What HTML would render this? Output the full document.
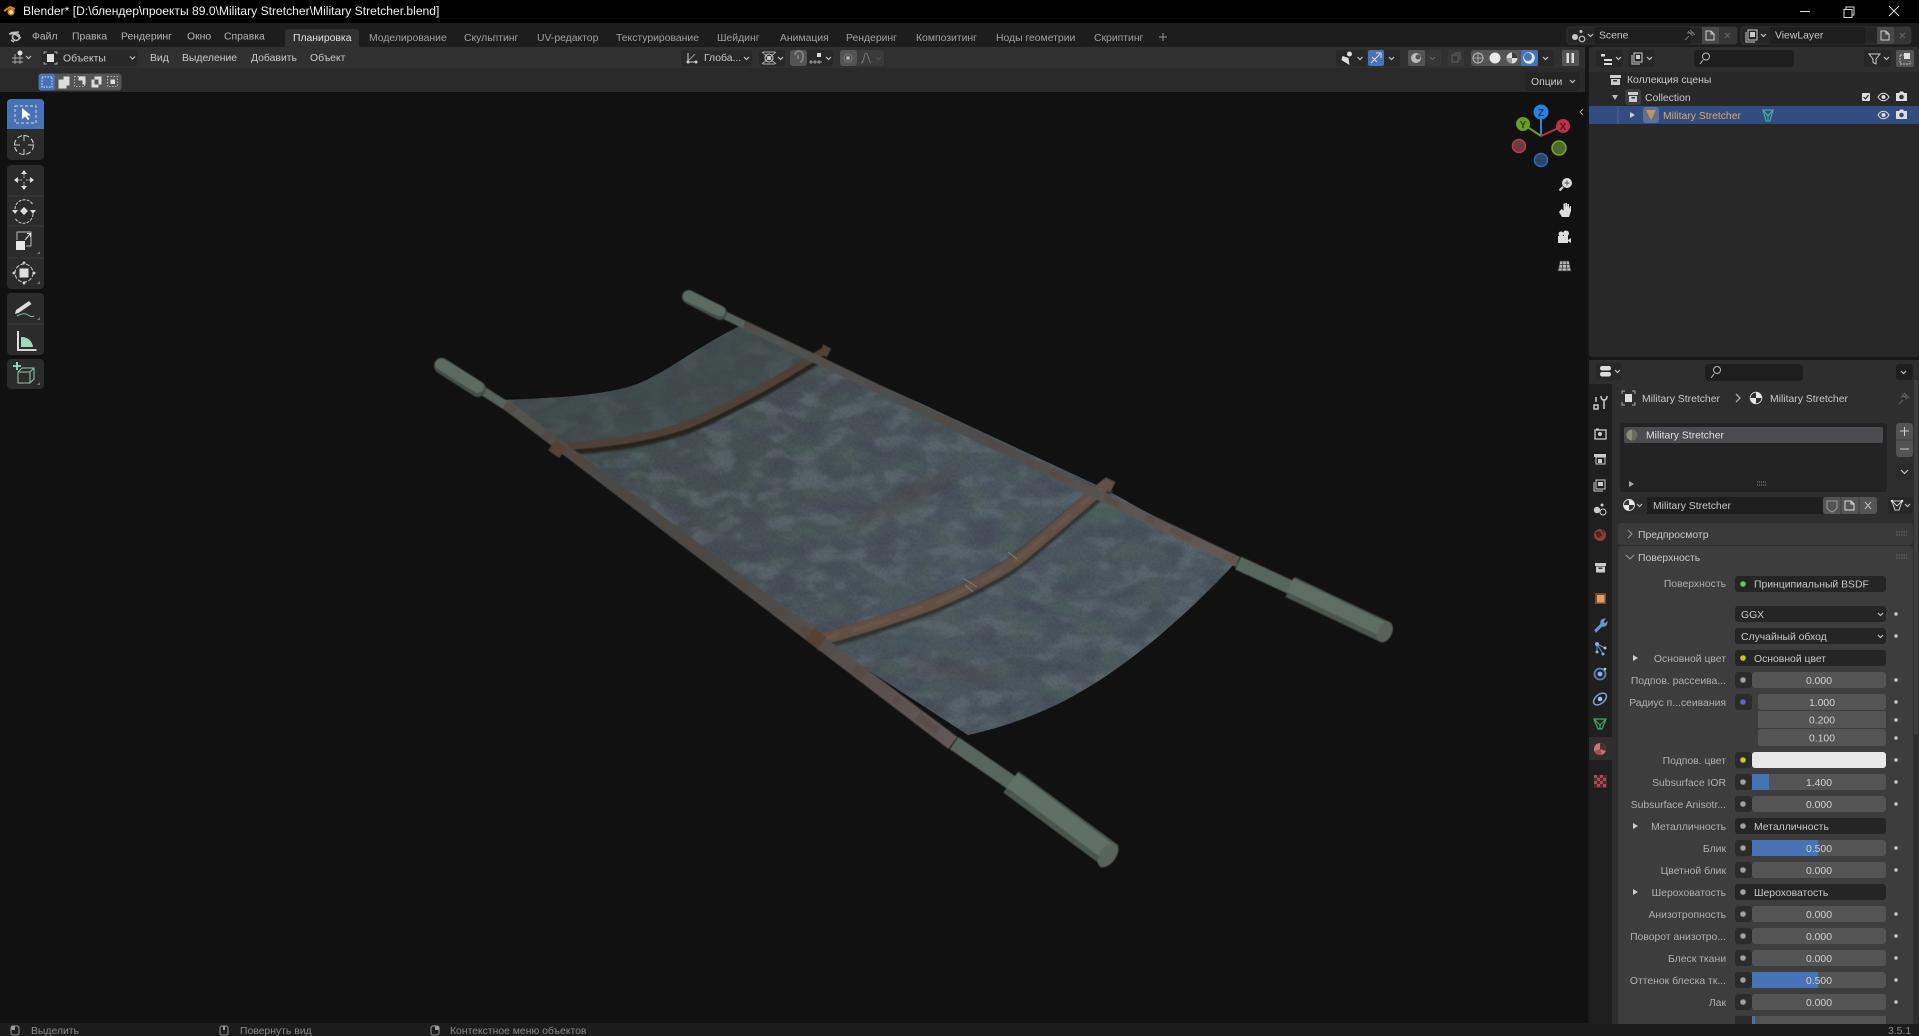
<!DOCTYPE html>
<html lang="ru"><head><meta charset="utf-8"><title>Blender</title>
<style>
html,body{margin:0;padding:0;background:#111;width:1919px;height:1036px;overflow:hidden}
svg{display:block;position:absolute;left:0;top:0}
text{font-family:"Liberation Sans","Noto Sans CJK SC",sans-serif;font-size:10.4px;fill:#c0c0c0;white-space:pre}
.m{fill:#a0a0a0}.w{fill:#e0e0e0}.l{fill:#b0b0b0;text-anchor:end}.v{fill:#d2d2d2;text-anchor:middle}.f{fill:#c8c8c8}.d{fill:#8a8a8a}
.ic{fill:none;stroke:#c0c0c0;stroke-width:1.2}
.fi{fill:#c8c8c8}
.num{fill:#545454}.sk{fill:#2b2b2b}.fd{fill:#252525}.dot{fill:#cfcfcf}
</style></head><body>
<svg width="1919" height="1036" viewBox="0 0 1919 1036" xmlns="http://www.w3.org/2000/svg">
<defs>
<clipPath id="fab"><path d="M502 400C560 398 610 395 640 383C670 370 700 345 742 325L920 403L1103 488L1236 562C1190 612 1130 665 1075 695C1040 715 1000 728 968 735L737 585L558 450Z"/></clipPath>
<linearGradient id="fg" gradientUnits="userSpaceOnUse" x1="520" y1="340" x2="1100" y2="700"><stop offset="0" stop-color="#404a4a"/><stop offset=".3" stop-color="#465052"/><stop offset=".65" stop-color="#4c565e"/><stop offset="1" stop-color="#4d5860"/></linearGradient>
<filter id="c1" x="0" y="0" width="1" height="1" color-interpolation-filters="sRGB"><feTurbulence type="fractalNoise" baseFrequency=".03 .05" numOctaves="3" seed="4"/><feColorMatrix values="0 0 0 0 .31 0 0 0 0 .38 0 0 0 0 .36 5.500 0 0 0 -2.700"/><feGaussianBlur stdDeviation="1"/></filter>
<filter id="c2" x="0" y="0" width="1" height="1" color-interpolation-filters="sRGB"><feTurbulence type="fractalNoise" baseFrequency=".034 .055" numOctaves="3" seed="11"/><feColorMatrix values="0 0 0 0 .39 0 0 0 0 .43 0 0 0 0 .46 5.500 0 0 0 -2.700"/><feGaussianBlur stdDeviation="1"/></filter>
<filter id="c3" x="0" y="0" width="1" height="1" color-interpolation-filters="sRGB"><feTurbulence type="fractalNoise" baseFrequency=".03 .05" numOctaves="3" seed="23"/><feColorMatrix values="0 0 0 0 .27 0 0 0 0 .29 0 0 0 0 .34 5.500 0 0 0 -2.800"/><feGaussianBlur stdDeviation="1"/></filter>
<filter id="gr" x="0" y="0" width="1" height="1" color-interpolation-filters="sRGB"><feTurbulence type="fractalNoise" baseFrequency=".4" numOctaves="2" seed="7"/><feColorMatrix values="0 0 0 0 .1 0 0 0 0 .1 0 0 0 0 .12 3 0 0 0 -1.300"/></filter>
<filter id="b1" x="-20%" y="-20%" width="140%" height="140%"><feGaussianBlur stdDeviation="1"/></filter>
<filter id="b0" x="-5%" y="-5%" width="110%" height="110%"><feGaussianBlur stdDeviation=".6"/></filter>
<filter id="b4" x="-30%" y="-30%" width="160%" height="160%"><feGaussianBlur stdDeviation="7"/></filter>
<linearGradient id="p1" gradientUnits="userSpaceOnUse" x1="500" y1="402" x2="953" y2="743"><stop offset="0" stop-color="#575652"/><stop offset=".15" stop-color="#4c4a46"/><stop offset=".5" stop-color="#4c4a46"/><stop offset=".85" stop-color="#5a5150"/><stop offset="1" stop-color="#625856"/></linearGradient>
<linearGradient id="p2" gradientUnits="userSpaceOnUse" x1="742" y1="325" x2="1238" y2="562"><stop offset="0" stop-color="#505350"/><stop offset=".5" stop-color="#4e4c4b"/><stop offset="1" stop-color="#645a58"/></linearGradient>
</defs>

<!-- backgrounds -->
<rect x="0" y="0" width="1919" height="23" fill="#000"/>
<rect x="0" y="23" width="1919" height="24" fill="#1d1d1d"/>
<rect x="0" y="47" width="1919" height="989" fill="#161616"/>
<rect x="0" y="92" width="1587" height="932" fill="#111"/>
<rect x="0" y="47" width="1585" height="21" fill="#303030"/>
<rect x="0" y="68" width="1585" height="24" fill="#2a2a2a"/>
<rect x="0" y="1023" width="1919" height="13" fill="#1c1c1c"/>

<!-- title bar -->
<circle cx="11" cy="12" r="3.600" fill="#e87d0d"/><circle cx="11" cy="12" r="1.800" fill="#fff"/><path d="M4 11L10 7L15 9" stroke="#e87d0d" stroke-width="2" fill="none"/>
<text x="23" y="15" style="font-size:12.1px;fill:#f0f0f0">Blender* [D:\блендер\проекты 89.0\Military Stretcher\Military Stretcher.blend]</text>
<path d="M1800 11.500H1810" stroke="#ddd"/><path d="M1844 9.500h8v8h-8zM1846 9.500v-2.500h8v8h-2" fill="none" stroke="#ddd"/><path d="M1889 6l10 10M1899 6l-10 10" stroke="#ddd"/>

<!-- top bar -->
<g class="ic" stroke="#ccc"><circle cx="16" cy="37" r="3.500" stroke-width="1.600"/><path d="M9 34L16 33M11 40L14 42M19 32L12 32.500L21 38" stroke-width="1.400"/></g>
<text x="32" y="39.500" style="fill:#b4b4b4">Файл</text>
<text x="72" y="39.500" style="fill:#b4b4b4">Правка</text>
<text x="121" y="39.500" style="fill:#b4b4b4">Рендеринг</text>
<text x="187" y="39.500" style="fill:#b4b4b4">Окно</text>
<text x="224" y="39.500" style="fill:#b4b4b4">Справка</text>
<path d="M285 47V32a3 3 0 0 1 3-3h68a3 3 0 0 1 3 3V47Z" fill="#303030"/>
<text x="293" y="41" class="w">Планировка</text>
<text x="369" y="41" class="m">Моделирование</text>
<text x="464" y="41" class="m">Скульптинг</text>
<text x="537" y="41" class="m">UV-редактор</text>
<text x="616" y="41" class="m">Текстурирование</text>
<text x="717" y="41" class="m">Шейдинг</text>
<text x="780" y="41" class="m">Анимация</text>
<text x="846" y="41" class="m">Рендеринг</text>
<text x="916" y="41" class="m">Композитинг</text>
<text x="996" y="41" class="m">Ноды геометрии</text>
<text x="1094" y="41" class="m">Скриптинг</text>
<path d="M1159 37h8M1163 33v8" stroke="#999"/>

<!-- scene / viewlayer -->
<rect x="1567" y="27" width="170" height="17" rx="3" fill="#252525" stroke="#333"/>
<rect x="1595" y="27" width="95" height="17" fill="#1e1e1e"/>
<rect x="1702" y="27" width="17" height="17" fill="#484848"/><rect x="1719" y="27" width="18" height="17" rx="2" fill="#363636"/>
<circle cx="1575" cy="37" r="3" class="fi"/><circle cx="1582" cy="39" r="2.800" class="ic"/><circle cx="1581" cy="31.500" r="1.500" class="fi"/><path d="M1588 34l2.500 2.500l2.500-2.500" class="ic"/>
<text x="1599" y="38.500" class="f">Scene</text>
<path d="M1685 40l4-4M1688 31l5 5M1690 30l5 5M1687 33l7-0" stroke="#777" fill="none"/>
<path d="M1706 31h5l3 3v6h-8zM1711 31v3h3" fill="none" stroke="#ccc"/><path d="M1725 33l5 5M1730 33l-5 5" stroke="#666"/>
<rect x="1741" y="27" width="170" height="17" rx="3" fill="#252525" stroke="#333"/>
<rect x="1770" y="27" width="95" height="17" fill="#1e1e1e"/>
<rect x="1877" y="27" width="17" height="17" fill="#484848"/><rect x="1894" y="27" width="17" height="17" rx="2" fill="#363636"/>
<path d="M1748 30h9v10h-9zM1746 32v10h9" fill="none" stroke="#ccc"/><rect x="1750" y="32" width="5" height="5" fill="#ccc"/><path d="M1761 34l2.500 2.500l2.500-2.500" class="ic"/>
<text x="1775" y="38.500" class="f">ViewLayer</text>
<path d="M1881 31h5l3 3v6h-8zM1886 31v3h3" fill="none" stroke="#ccc"/><path d="M1900 33l5 5M1905 33l-5 5" stroke="#666"/>

<!-- viewport header left -->
<path d="M12 58h11M12 62h11M15 54v10M20 54v10" stroke="#aaa" fill="none" stroke-width=".9"/><circle cx="20" cy="53" r="2.500" fill="#ddd"/><path d="M26 56l2.500 2.500l2.500-2.500" class="ic"/>
<rect x="41" y="50" width="97" height="16" rx="3" fill="#282828"/>
<rect x="47" y="54" width="7" height="8" fill="#ddd"/><path d="M44 54v-2h3M54 52h3v2M44 62v2h3M54 64h3v-2" fill="none" stroke="#aaa"/>
<text x="63" y="61.500" class="f">Объекты</text><path d="M130 56.500l2.500 2.500l2.500-2.500" class="ic"/>
<text x="150" y="61" class="f">Вид</text><text x="182" y="61" class="f">Выделение</text><text x="251" y="61" class="f">Добавить</text><text x="310" y="61" class="f">Объект</text>

<!-- tool settings select modes -->
<g transform="translate(-1.500,.5)">
<rect x="40" y="73" width="83" height="17" rx="3" fill="#545454"/>
<rect x="40" y="73" width="16.500" height="17" rx="3" fill="#4772b3"/>
<rect x="43.500" y="76.500" width="10" height="10" fill="none" stroke="#e8e8e8" stroke-dasharray="1.500 1.200"/>
<path d="M60 79h5v-3h6v9h-3v3h-8z" fill="#ddd"/>
<rect x="76" y="76" width="10" height="10" fill="none" stroke="#aaa" stroke-dasharray="1.500 1.500"/><path d="M80 76h7v8h-3v-4h-4z" fill="#ddd"/>
<path d="M93 79h3v-3h7v8h-3v3h-7z" fill="#ddd"/><rect x="96" y="79" width="4" height="5" fill="#545454"/>
<rect x="109" y="76" width="10" height="10" fill="none" stroke="#aaa" stroke-dasharray="1.500 1.500"/><rect x="112" y="79" width="4.500" height="4.500" fill="#ddd"/>
</g>

<!-- center header -->
<rect x="681" y="50" width="71" height="16" rx="3" fill="#282828"/>
<path d="M688 53v9h9" fill="none" stroke="#ccc"/><path d="M687 62l8-8" stroke="#999"/><circle cx="688" cy="62" r="1.500" fill="#ccc"/><circle cx="696" cy="62" r="1.500" fill="#ccc"/>
<text x="704" y="61" class="f">Глоба...</text><path d="M744 57l2.500 2.500l2.500-2.500" class="ic"/>
<rect x="759" y="50" width="26" height="16" rx="3" fill="#282828"/>
<path d="M762 52l14 12M776 52l-14 12M763 52h12M763 64h12" stroke="#aaa" fill="none"/><circle cx="769" cy="58" r="4" fill="none" stroke="#ccc"/><circle cx="769" cy="58" r="2" fill="#ccc"/><path d="M778 57l2.500 2.500l2.500-2.500" class="ic"/>
<rect x="790" y="50" width="43" height="16" rx="3" fill="#282828"/><rect x="790" y="50" width="17" height="16" rx="3" fill="#545454"/>
<path d="M795 55a4 4 0 0 1 8 0v3a4 4 0 0 1-3 4M798 55v4" fill="none" stroke="#888" stroke-width="1.600"/>
<path d="M809 62h13M811 60v4M815 60v4M819 60v4" stroke="#aaa" fill="none" stroke-width=".9"/><rect x="817" y="53" width="4" height="4" fill="#ddd"/><path d="M826 57l2.500 2.500l2.500-2.500" class="ic"/>
<rect x="840" y="50" width="44" height="16" rx="3" fill="#3a3a3a"/><rect x="840" y="50" width="17" height="16" rx="3" fill="#545454"/>
<circle cx="848" cy="58" r="4" fill="none" stroke="#777"/><circle cx="848" cy="58" r="1.800" fill="#bbb"/>
<path d="M861 63c3 0 3-10 5-10s3 10 5 10" fill="none" stroke="#777"/><path d="M876 57l2.500 2.500l2.500-2.500" fill="none" stroke="#555"/>

<!-- right header icons -->
<rect x="1336" y="50" width="31" height="16" rx="3" fill="#282828"/>
<g transform="translate(2.500,0)"><path d="M1339 60l8 5l-1-7l-6-2z" fill="#ddd"/><circle cx="1347" cy="54" r="2.500" fill="#ddd"/><path d="M1355 57l2.500 2.500l2.500-2.500" class="ic"/></g>
<rect x="1368" y="50" width="16" height="16" rx="2" fill="#4772b3"/><rect x="1384" y="50" width="16" height="16" rx="2" fill="#282828"/>
<path d="M1371 63l9-9M1376 53h5v5M1372 57l5 5" fill="none" stroke="#ddd"/><path d="M1389 57l2.500 2.500l2.500-2.500" class="ic"/>
<rect x="1408" y="50" width="17" height="16" rx="2" fill="#545454"/><rect x="1425" y="50" width="16" height="16" rx="2" fill="#363636"/>
<circle cx="1416" cy="58" r="5" fill="#bbb"/><circle cx="1418" cy="57" r="2.500" fill="#545454"/><path d="M1430 57l2.500 2.500l2.500-2.500" fill="none" stroke="#666"/>
<rect x="1448" y="50" width="16" height="16" rx="2" fill="#363636"/><path d="M1452 55h6v7h-6zM1454 53h6v7" fill="none" stroke="#5f5f5f"/>
<rect x="1471" y="50" width="68" height="16" rx="3" fill="#545454"/><rect x="1521" y="50" width="17" height="16" rx="2" fill="#4772b3"/><rect x="1538" y="50" width="16" height="16" rx="2" fill="#282828"/>
<circle cx="1478" cy="58" r="5" fill="none" stroke="#bbb"/><path d="M1473 58h10M1478 53v10" stroke="#bbb" stroke-width=".8"/>
<circle cx="1495" cy="58" r="5.500" fill="#e8e8e8"/>
<circle cx="1512" cy="58" r="5.500" fill="#ddd"/><path d="M1512 58V52.500a5.500 5.500 0 0 1 5.500 5.500z" fill="#3a3a3a"/><path d="M1512 58h-5.500a5.500 5.500 0 0 0 5.500 5.500z" fill="#9a9a9a"/>
<circle cx="1529" cy="58" r="5.800" fill="#d9e4f5"/><circle cx="1528" cy="57" r="4" fill="#4772b3"/>
<path d="M1543 57l2.500 2.500l2.500-2.500" class="ic"/>
<rect x="1562" y="50" width="17" height="16" rx="2" fill="#545454"/><rect x="1566.500" y="53" width="2.500" height="10" fill="#ddd"/><rect x="1571.500" y="53" width="2.500" height="10" fill="#ddd"/>
<rect x="1526" y="73" width="53" height="17" rx="3" fill="#252525" stroke="#222"/><text x="1531" y="85" class="f">Опции</text><path d="M1570 80l2.500 2.500l2.500-2.500" class="ic"/>

<!-- tool shelf -->
<rect x="7" y="99" width="37" height="61" rx="4" fill="#2b2b2b"/><path d="M7 129V103a4 4 0 0 1 4-4h29a4 4 0 0 1 4 4v26Z" fill="#4772b3"/>
<rect x="15" y="106" width="21" height="17" fill="none" stroke="#cfd9ea" stroke-dasharray="3 2"/><path d="M22 108v11l3-2.500l3 3.500l1.500-1l-2.500-3.500h4z" fill="#fff"/>
<circle cx="24" cy="145" r="9.500" fill="none" stroke="#ddd" stroke-dasharray="5 2.500"/><path d="M14 145h6M28 145h6M24 135v6M24 149v6" stroke="#ccc"/>
<rect x="7" y="165" width="37" height="124" rx="4" fill="#2b2b2b"/>
<path d="M7 196h37M7 226h37M7 258h37" stroke="#3a3a3a"/>
<path d="M24 170l3 4h-6zM24 190l3-4h-6zM14 180l4-3v6zM34 180l-4-3v6z" fill="#ddd"/><path d="M24 174v4M24 182v4M18 180h4M26 180h4" stroke="#ccc" stroke-dasharray="1.500 1"/>
<path d="M15 209a9.500 9.500 0 0 1 18-4M33 214a9.500 9.500 0 0 1-18 4" fill="none" stroke="#ccc" stroke-dasharray="3 1.200"/><path d="M24 207l4 4l-4 4l-4-4z" fill="#ddd"/><path d="M12 210h6l-3 4zM30 210h6l-3 4z" fill="#ddd"/>
<rect x="16" y="241" width="9" height="9" fill="#e6e6e6"/><path d="M17 240v-8h14v14h-5" fill="none" stroke="#bbb"/><path d="M25 240l5-6M27 233.500h3.500v3.500" fill="none" stroke="#ddd"/>
<circle cx="24" cy="273" r="9" fill="none" stroke="#ccc" stroke-dasharray="4 1.500"/><rect x="19.500" y="268.500" width="9" height="9" fill="#ddd"/><path d="M24 261l2 2.500h-4zM24 285l2-2.500h-4zM12 273l2.500-2v4zM36 273l-2.500-2v4z" fill="#ddd"/>
<rect x="7" y="293" width="37" height="62" rx="4" fill="#2b2b2b"/><path d="M7 324h37" stroke="#3a3a3a"/>
<path d="M15 314l1-4l13-9l2.500 3l-13 9z" fill="#ddd"/><path d="M17 316c6-3 8-3 11-1s4 2 6 1" fill="none" stroke="#88b9a6"/>
<path d="M18 331v19h18" fill="none" stroke="#ddd" stroke-width="2"/><path d="M21 337v10h12a11 11 0 0 0-12-10z" fill="#9fd9bd"/><path d="M17 350h20" stroke="#ccc"/>
<rect x="7" y="359" width="37" height="30" rx="4" fill="#2b2b2b"/>
<path d="M18 372l4-4h12v11l-4 4h-12zM18 372h12v11M30 372l4-4" fill="none" stroke="#8fc9ad"/><path d="M13 366h8M17 362v8" stroke="#9fe0c0" stroke-width="1.800"/>
<path d="M40 128v-3l-3 3zM40 284v-3l-3 3zM40 320v-3l-3 3zM40 385v-3l-3 3zM40 254v-3l-3 3z" fill="#777"/>

<!-- stretcher -->
<g>
<path d="M502 400C560 398 610 395 640 383C670 370 700 345 742 325L920 403L1103 488L1236 562C1190 612 1130 665 1075 695C1040 715 1000 728 968 735L737 585L558 450Z" fill="url(#fg)"/>
<g clip-path="url(#fab)">
<rect x="480" y="310" width="780" height="440" filter="url(#c1)" opacity=".55"/>
<rect x="480" y="310" width="780" height="440" filter="url(#c2)" opacity=".6"/>
<rect x="480" y="310" width="780" height="440" filter="url(#c3)" opacity=".55"/>
<rect x="480" y="310" width="780" height="440" filter="url(#gr)" opacity=".1"/>
<path d="M490 395L740 320L830 352L690 430L560 450Z" fill="#3e4747" opacity=".5" filter="url(#b1)"/>
<ellipse cx="905" cy="500" rx="60" ry="8" fill="#54433f" opacity=".35" filter="url(#b4)" transform="rotate(-28 905 500)"/>
<ellipse cx="950" cy="672" rx="50" ry="8" fill="#524444" opacity=".3" filter="url(#b4)" transform="rotate(10 950 672)"/>
<ellipse cx="1100" cy="515" rx="30" ry="12" fill="#44705f" opacity=".35" filter="url(#b4)"/>
<ellipse cx="925" cy="632" rx="40" ry="7" fill="#44705f" opacity=".3" filter="url(#b4)"/>
</g>
<!-- straps -->
<path d="M563 450C600 449 650 442 687 429C720 416 780 384 822 356" fill="none" stroke="#27231f" stroke-width="10" filter="url(#b1)"/>
<path d="M563 446C600 445 650 438 687 425C720 412 780 380 822 352" fill="none" stroke="#4f4138" stroke-width="7.500" filter="url(#b0)"/>
<path d="M816 644C860 632 920 612 947 600C975 588 1005 572 1023 557C1050 535 1075 512 1108 486" fill="none" stroke="#33312d" stroke-width="15" filter="url(#b1)"/>
<path d="M816 641C860 629 920 610 947 598C975 585 1005 570 1023 555C1050 533 1075 510 1108 483" fill="none" stroke="#5f4f45" stroke-width="11.500" filter="url(#b0)"/>
<path d="M816 641C860 629 920 610 947 598C975 585 1005 570 1023 555C1050 533 1075 510 1108 483" fill="none" stroke="#6e5a4c" stroke-width="4" stroke-dasharray="24 14 40 10" opacity=".6"/>
<path d="M963 578l14 9M1008 552l9 7M973 592l-8-7" stroke="#7a8478" fill="none"/>
<!-- poles -->
<g filter="url(#b0)">
<path d="M508 400L957.500 737L948.500 749L502 408Z" fill="url(#p1)"/>
<path d="M505 404L953 743" stroke="#544539" stroke-width="8" fill="none" stroke-dasharray="12 38 7 22 26 41" opacity=".45"/>
<path d="M747 321.400L1240 557L1236 567L743 328.600Z" fill="url(#p2)"/>
<path d="M745 325L1238 562" stroke="#554a42" stroke-width="6" fill="none" stroke-dasharray="16 30 9 18 24 36" opacity=".45"/>
<path d="M552 445L563 453" stroke="#553f30" stroke-width="13"/>
<path d="M810 634L822 643" stroke="#553f33" stroke-width="14"/>
<path d="M821 349L829 353" stroke="#4f4036" stroke-width="10"/>
<path d="M1103 482L1113 487" stroke="#5f4f45" stroke-width="11"/>
</g>
<!-- grips -->
<g filter="url(#b0)">
<path d="M477 387L505 405" stroke="#59625d" stroke-width="9"/>
<path d="M442 366L478 389" stroke="#434e48" stroke-width="16" stroke-linecap="round"/><path d="M441 364L478 387" stroke="#5b6a62" stroke-width="12" stroke-linecap="round"/>
<path d="M718 312L745 325" stroke="#55605b" stroke-width="8"/>
<path d="M689 297L720 313" stroke="#434e48" stroke-width="14" stroke-linecap="round"/><path d="M688 296L720 311" stroke="#5b6a62" stroke-width="11" stroke-linecap="round"/>
<path d="M1238 563L1290 587" stroke="#56655d" stroke-width="14"/>
<path d="M1290 587L1385 632" stroke="#48544e" stroke-width="22"/>
<path d="M1290 585L1385 630" stroke="#5e6d65" stroke-width="15"/>
<ellipse cx="1385" cy="632" rx="7" ry="11" transform="rotate(25 1385 632)" fill="#566259"/>
<path d="M954 743L1012 783" stroke="#56655d" stroke-width="15"/>
<path d="M1011 782L1107 853" stroke="#48544e" stroke-width="26"/>
<path d="M1012 780L1107 851" stroke="#5f6f66" stroke-width="18"/>
<ellipse cx="1108" cy="855" rx="8" ry="14" transform="rotate(36 1108 855)" fill="#58645c"/>
</g>
</g>

<!-- gizmo -->
<path d="M1541 136V112" stroke="#3a80d0" stroke-width="2"/><path d="M1541 136L1523 124" stroke="#6a9a2a" stroke-width="2"/><path d="M1541 136L1563 126" stroke="#b3364a" stroke-width="2"/>
<circle cx="1519" cy="146" r="6.500" fill="#6d3a42" stroke="#b5404f" stroke-width="1.500"/>
<circle cx="1559" cy="148" r="7" fill="#4e6a2a" stroke="#76a62c" stroke-width="1.500"/>
<circle cx="1541" cy="160" r="6.500" fill="#2c466a" stroke="#2f6ab0" stroke-width="1.500"/>
<circle cx="1541" cy="112" r="7.500" fill="#2a82e0"/><text x="1541" y="116" text-anchor="middle" style="font-size:10px;font-weight:bold;fill:#103a66">Z</text>
<circle cx="1523" cy="124" r="7" fill="#6a9c26"/><text x="1523" y="128" text-anchor="middle" style="font-size:10px;font-weight:bold;fill:#2c4410">Y</text>
<circle cx="1563" cy="126" r="7" fill="#b8334a"/><text x="1563" y="130" text-anchor="middle" style="font-size:10px;font-weight:bold;fill:#521320">X</text>
<path d="M1583 109l-3 3l3 3" fill="none" stroke="#aaa"/>
<circle cx="1567" cy="183" r="5" fill="#ddd"/><path d="M1564.500 183h5M1567 180.500v5" stroke="#555"/><path d="M1563 187l-3.500 3.500" stroke="#ddd" stroke-width="2"/>
<path d="M1559 212l3 5h7l2-6v-5l-1 0l-1 3v-5h-1.500l-.5 4v-5h-1.500l-.5 5v-4.500h-1.500v7l-2-1.500z" fill="#ddd"/>
<rect x="1558" y="236" width="10" height="7" fill="#ddd"/><circle cx="1561" cy="234" r="2.500" fill="#ddd"/><circle cx="1566" cy="233.500" r="3" fill="#ddd"/><path d="M1568 240l3-2v5l-3-2z" fill="#ddd"/>
<path d="M1560 261h9l2 10h-13zM1563 261l-1 10M1566 261l1 10M1559 264.500h11M1558.500 268h12" fill="#bbb" stroke="#333" stroke-width=".8"/>

<!-- outliner -->
<rect x="1589" y="47" width="330" height="310" fill="#282828" rx="3"/>
<path d="M1589 72V50a3 3 0 0 1 3-3h324a3 3 0 0 1 3 3v22Z" fill="#2e2e2e"/>
<rect x="1596" y="50" width="27" height="17" rx="3" fill="#272727"/><path d="M1601 54h4v2.500h-4zM1604 59h8v2h-8zM1604 63h8v2h-8z" fill="#ddd"/><path d="M1616 57l2.500 2.500l2.500-2.500" class="ic"/>
<rect x="1628" y="50" width="27" height="17" rx="3" fill="#272727"/><path d="M1634 53h8v9h-8zM1632 55v9h8" fill="none" stroke="#ccc"/><rect x="1636" y="55" width="4" height="4" fill="#ccc"/><path d="M1647 57l2.500 2.500l2.500-2.500" class="ic"/>
<rect x="1694" y="50" width="100" height="17" rx="4" fill="#1e1e1e"/><circle cx="1706" cy="56.500" r="3.500" fill="none" stroke="#bbb"/><path d="M1703 60l-3 4" stroke="#bbb"/>
<rect x="1864" y="50" width="27" height="17" rx="3" fill="#272727"/><path d="M1869 54h11l-4 5v5l-3-1.500v-3.500z" fill="none" stroke="#ccc"/><path d="M1884 57l2.500 2.500l2.500-2.500" class="ic"/>
<rect x="1896" y="50" width="18" height="17" rx="2" fill="#545454"/><path d="M1900 55h6M1900 55v9h10v-3" fill="none" stroke="#bbb" stroke-dasharray="2 1"/><rect x="1904" y="53" width="6" height="6" fill="#ddd"/>
<path d="M1610 75h11v3h-11zM1611 79h9v6h-9z" fill="#ccc"/><rect x="1613" y="80" width="4" height="1.500" fill="#333"/>
<text x="1627" y="83" class="f">Коллекция сцены</text>
<rect x="1589" y="106" width="330" height="18" fill="#334d80"/>
<path d="M1612 95l3 5l3-5z" fill="#bbb"/>
<rect x="1625" y="89" width="16" height="16" rx="3" fill="#3e3e3e"/><path d="M1628 92h10v3h-10zM1629 96h8v6h-8z" fill="#ccc"/><rect x="1631.500" y="97" width="3.500" height="1.500" fill="#333"/>
<text x="1645" y="101" class="f">Collection</text>
<path d="M1618 106v18" stroke="#4c6290"/><path d="M1630 112l5 3l-5 3z" fill="#c5cede"/>
<rect x="1643" y="107" width="16" height="16" rx="3" fill="#5d7196"/><path d="M1646 110h10l-5 10z" fill="#c9905a"/>
<text x="1663" y="119" style="fill:#dca860">Military Stretcher</text>
<path d="M1763 110h10l-3 11h-4zM1763 110l5 6M1773 110l-5 6M1768 116v4" fill="none" stroke="#3fbfa8"/>
<rect x="1862" y="93" width="8" height="8" rx="1" fill="#ddd"/><path d="M1863.500 97l2 2l3-4" fill="none" stroke="#222" stroke-width="1.200"/>
<g transform="translate(-1,0)">
<path d="M1879 97c3-5 8-5 11 0c-3 5-8 5-11 0z" fill="none" stroke="#ddd"/><circle cx="1884.500" cy="97" r="2" fill="#ddd"/>
<path d="M1897 93h3l1-1.500h3l1 1.500h3v8h-11z" fill="#ddd"/><circle cx="1902.500" cy="97" r="2.300" fill="#333"/>
<path d="M1879 115c3-5 8-5 11 0c-3 5-8 5-11 0z" fill="none" stroke="#ddd"/><circle cx="1884.500" cy="115" r="2" fill="#ddd"/>
<path d="M1897 111h3l1-1.500h3l1 1.500h3v8h-11z" fill="#ddd"/><circle cx="1902.500" cy="115" r="2.300" fill="#334d80"/>
</g>

<!-- properties -->
<rect x="1589" y="360" width="330" height="664" fill="#2e2e2e" rx="3"/>
<rect x="1589" y="360" width="330" height="24" fill="#2e2e2e"/>
<rect x="1596" y="363" width="26" height="17" rx="3" fill="#272727"/><rect x="1600" y="366" width="11" height="4.500" rx="2.200" fill="#ddd"/><rect x="1600" y="372" width="11" height="4.500" rx="2.200" fill="#ddd"/><path d="M1615 370l2.500 2.500l2.500-2.500" class="ic"/>
<rect x="1705" y="364" width="98" height="17" rx="4" fill="#1e1e1e"/><circle cx="1717" cy="370" r="3.500" fill="none" stroke="#bbb"/><path d="M1714 374l-3 4" stroke="#bbb"/>
<rect x="1896" y="364" width="17" height="16" rx="3" fill="#1f1f1f"/><path d="M1901 371l2.500 2.500l2.500-2.500" class="ic"/>
<rect x="1589" y="384" width="23" height="640" fill="#1f1f1f"/>
<rect x="1589" y="737" width="23" height="23" fill="#2e2e2e"/>
<!-- tabs -->
<path d="M1596 397l0 5M1594 405h4v4h-4zM1601 396c0 3 1.500 4 3 4s3-1 3-4M1604 400v9" fill="none" stroke="#ccc" stroke-width="1.500"/>
<rect x="1595" y="430" width="11" height="9" fill="none" stroke="#ccc" stroke-width="1.300"/><circle cx="1600" cy="434" r="2" fill="#ccc"/><path d="M1596 429h3" stroke="#ccc"/>
<rect x="1594" y="454" width="12" height="3" fill="#ccc"/><rect x="1596" y="457" width="9" height="7" fill="none" stroke="#ccc"/><rect x="1598" y="459" width="4" height="4" fill="#ccc"/>
<path d="M1596 480h9v9h-9zM1594 482v9h9" fill="none" stroke="#ccc"/><rect x="1598" y="482" width="5" height="4" fill="#ccc"/>
<circle cx="1597" cy="510" r="3.200" fill="#ccc"/><circle cx="1603" cy="512" r="3" fill="none" stroke="#ccc"/><circle cx="1602" cy="505" r="1.500" fill="#ccc"/>
<circle cx="1600" cy="535" r="6" fill="#8f3c3c"/><path d="M1596 533c2-2 4-1 5 1s-2 3-3 3zM1602 530l2 3" stroke="#3a2222" fill="#622"/>
<rect x="1595" y="563" width="11" height="3" fill="#ccc"/><rect x="1596" y="566.500" width="9" height="6" fill="#ccc"/><rect x="1598.500" y="567.500" width="4" height="1.500" fill="#333"/>
<path d="M1595 593h11v11h-11z" fill="#7a4a1f"/><rect x="1597" y="595" width="7.500" height="7.500" fill="#d8a070"/>
<path d="M1595 630l6-6c-1-3 1-5 4-5l-2 3l2 2l2-2c0 3-2 5-5 4l-6 6z" fill="#6f93d0" stroke="#6f93d0"/>
<path d="M1597 644l8 4M1597 644l6 10M1597 644v8" stroke="#6e8fbf"/><circle cx="1597" cy="644" r="2" fill="#8aaee0"/><circle cx="1605" cy="648" r="1.500" fill="#bbb"/><circle cx="1603" cy="654" r="1.500" fill="#8aaee0"/><circle cx="1597" cy="652" r="1.500" fill="#8aaee0"/>
<circle cx="1600" cy="674" r="5.500" fill="none" stroke="#5f7fb5" stroke-width="1.800"/><circle cx="1600" cy="674" r="2.500" fill="#8aaee0"/><circle cx="1605" cy="669" r="1.300" fill="#ccc"/>
<ellipse cx="1600" cy="699" rx="7.500" ry="4.500" transform="rotate(-40 1600 699)" fill="none" stroke="#7f9fd0" stroke-width="1.500"/><circle cx="1600" cy="699" r="2.300" fill="#a0c0f0"/>
<path d="M1594 719h12l-4 10h-4zM1594 719l6 6M1606 719l-6 6M1600 725v4" fill="none" stroke="#3fa86c" stroke-width="1.200"/>
<circle cx="1600" cy="749" r="6" fill="#c77478"/><path d="M1600 743a6 6 0 0 1 5.500 8l-5.500-2z" fill="#4c3035"/><path d="M1594.500 751a6 6 0 0 0 7 4l-1-6z" fill="#a04a52"/>
<g fill="#a84a58"><rect x="1594" y="775" width="13" height="13" fill="#4c2a30"/><rect x="1594" y="775" width="3" height="3"/><rect x="1600" y="775" width="3" height="3"/><rect x="1597" y="778" width="3" height="3"/><rect x="1603" y="778" width="3" height="3"/><rect x="1594" y="781" width="3" height="3"/><rect x="1600" y="781" width="3" height="3"/><rect x="1597" y="784" width="3" height="3"/><rect x="1603" y="784" width="3" height="3"/></g>

<!-- breadcrumb -->
<rect x="1625" y="394" width="7" height="8" fill="#ddd"/><path d="M1622 394v-3h3M1632 391h3v3M1622 402v3h3M1632 405h3v-3" fill="none" stroke="#aaa"/>
<text x="1642" y="402" class="f">Military Stretcher</text>
<path d="M1736 394l4 4l-4 4" fill="none" stroke="#aaa" stroke-width="1.300"/>
<circle cx="1756" cy="398" r="5.800" fill="#e8e8e8"/><path d="M1756 392.200a5.800 5.800 0 0 0-5.800 5.800h5.800zM1756 398h5.800a5.800 5.800 0 0 1-5.800 5.800z" fill="#2e2e2e"/><circle cx="1756" cy="398" r="5.800" fill="none" stroke="#ddd" stroke-width=".9"/>
<text x="1770" y="402" class="f">Military Stretcher</text>
<path d="M1899 404l4-4M1902 394l5 5M1904 393l5 5M1901 397l6-1" stroke="#666" fill="none"/>
<!-- material list -->
<rect x="1620" y="423" width="267" height="69" rx="3" fill="#232323"/>
<rect x="1624" y="427" width="259" height="16" rx="2" fill="#4b4b50"/>
<circle cx="1632" cy="435" r="5.500" fill="#6a6a5e"/><path d="M1632 429.500a5.500 5.500 0 0 0 0 11z" fill="#8a8a7e"/>
<text x="1646" y="438.500" class="w">Military Stretcher</text>
<path d="M1629 481l5 3l-5 3z" fill="#aaa"/>
<path d="M1757 482h10M1757 485h10" stroke="#888" stroke-dasharray="1 1"/>
<rect x="1896" y="423" width="17" height="34" rx="3" fill="#545454"/><path d="M1896 440h17" stroke="#3a3a3a"/><path d="M1900 431h9M1904.500 427v9" stroke="#ccc"/><path d="M1900 449h9" stroke="#ccc"/>
<rect x="1896" y="463" width="17" height="17" rx="3" fill="#2a2a2a"/><path d="M1901 470l3.500 3.500l3.500-3.500" class="ic"/>
<!-- selector -->
<g transform="translate(0,-1)">
<rect x="1620" y="498" width="28" height="17" rx="3" fill="#2c2c2c"/>
<circle cx="1629" cy="506" r="5.500" fill="#e8e8e8"/><path d="M1629 500.500a5.500 5.500 0 0 0-5.500 5.500h5.500zM1629 506h5.500a5.500 5.500 0 0 1-5.500 5.500z" fill="#333"/><circle cx="1629" cy="506" r="5.500" fill="none" stroke="#ddd" stroke-width=".9"/><path d="M1637 505l2.500 2.500l2.500-2.500" class="ic"/>
<rect x="1647" y="498" width="176" height="17" fill="#1e1e1e"/>
<text x="1653" y="510" class="f">Military Stretcher</text>
<rect x="1823" y="498" width="54" height="17" rx="3" fill="#545454"/><path d="M1841 498v17M1859 498v17" stroke="#3c3c3c"/>
<path d="M1827 502h10v6c0 2-3 4-5 5c-2-1-5-3-5-5z" fill="none" stroke="#999"/><path d="M1845 502h6l3 3v6h-9zM1851 502v3h3" fill="none" stroke="#ddd"/><path d="M1865 503l6 7M1871 503l-6 7" stroke="#bbb"/>
<rect x="1888" y="498" width="25" height="17" rx="3" fill="#272727"/><path d="M1892 502h10l-3 9h-4zM1892 502l5 5M1902 502l-5 5" fill="none" stroke="#ccc"/><circle cx="1892" cy="502" r="1.300" fill="#ddd"/><circle cx="1902" cy="502" r="1.300" fill="#ddd"/><path d="M1905 505l2.500 2.500l2.500-2.500" class="ic"/>
</g>
<!-- panels -->
<rect x="1618" y="523" width="295" height="22" rx="4" fill="#3a3a3a"/>
<path d="M1628 530l4 4l-4 4" fill="none" stroke="#999"/>
<text x="1638" y="538" class="f">Предпросмотр</text>
<path d="M1896 532h11M1896 535h11" stroke="#6c6c6c" stroke-dasharray="1.500 1"/>
<path d="M1618 1024V550a4 4 0 0 1 4-4h287a4 4 0 0 1 4 4V1024Z" fill="#3d3d3d"/>
<path d="M1626 555l4 4l4-4" fill="none" stroke="#999"/>
<text x="1638" y="561" class="f">Поверхность</text>
<path d="M1896 555h11M1896 558h11" stroke="#6c6c6c" stroke-dasharray="1.500 1"/>
<rect x="1914" y="380" width="4" height="354" fill="#3e3e3e"/>

<g transform="translate(0,-1)">
<text x="1726" y="588" class="l">Поверхность</text>
<rect x="1735" y="577" width="151" height="16" rx="3" class="fd"/><circle cx="1743" cy="585" r="2.800" fill="#63c763"/><text x="1754" y="588.500" class="f">Принципиальный BSDF</text>

<rect x="1735" y="607" width="151" height="16" rx="3" class="fd"/><text x="1741" y="619" class="f">GGX</text><path d="M1878 614l2.500 2.500l2.500-2.500" class="ic"/><circle cx="1896" cy="615" r="1.700" class="dot"/>
<rect x="1735" y="629" width="151" height="16" rx="3" class="fd"/><text x="1741" y="641" class="f">Случайный обход</text><path d="M1878 636l2.500 2.500l2.500-2.500" class="ic"/><circle cx="1896" cy="637" r="1.700" class="dot"/>

<path d="M1633 656l5 3l-5 3z" fill="#ccc"/><text x="1726" y="663" class="l">Основной цвет</text>
<rect x="1735" y="651" width="151" height="16" rx="3" class="fd"/><circle cx="1743" cy="659" r="2.800" fill="#c7c729"/><text x="1754" y="663" class="f">Основной цвет</text>

<text x="1726" y="685" class="l">Подпов. рассеива...</text>
<rect x="1735" y="673" width="17" height="16" rx="3" class="sk"/><rect x="1752" y="673" width="134" height="16" rx="3" class="num"/><circle cx="1743" cy="681" r="2.800" fill="#a1a1a1"/><text x="1819" y="685" class="v">0.000</text><circle cx="1896" cy="681" r="1.700" class="dot"/>

<text x="1726" y="707" class="l">Радиус п...сеивания</text>
<rect x="1735" y="695" width="17" height="16" rx="3" class="sk"/><circle cx="1743" cy="703" r="2.800" fill="#6363c7"/>
<rect x="1758" y="695" width="128" height="16" rx="3" class="num"/><text x="1822" y="707" class="v">1.000</text><circle cx="1896" cy="703" r="1.700" class="dot"/>
<rect x="1758" y="712" width="128" height="17" class="num"/><text x="1822" y="724.500" class="v">0.200</text><circle cx="1896" cy="721" r="1.700" class="dot"/>
<rect x="1758" y="730" width="128" height="17" rx="3" class="num"/><text x="1822" y="742.500" class="v">0.100</text><circle cx="1896" cy="739" r="1.700" class="dot"/>

<text x="1726" y="765" class="l">Подпов. цвет</text>
<rect x="1735" y="753" width="17" height="16" rx="3" class="sk"/><circle cx="1743" cy="761" r="2.800" fill="#c7c729"/><rect x="1752" y="753" width="134" height="16" rx="3" fill="#e8e8e8"/><circle cx="1896" cy="761" r="1.700" class="dot"/>

<text x="1726" y="787" class="l">Subsurface IOR</text>
<rect x="1735" y="775" width="17" height="16" rx="3" class="sk"/><rect x="1752" y="775" width="134" height="16" rx="3" class="num"/><rect x="1752" y="775" width="17" height="16" fill="#4772b3"/><circle cx="1743" cy="783" r="2.800" fill="#a1a1a1"/><text x="1819" y="787" class="v">1.400</text><circle cx="1896" cy="783" r="1.700" class="dot"/>

<text x="1726" y="809" class="l">Subsurface Anisotr...</text>
<rect x="1735" y="797" width="17" height="16" rx="3" class="sk"/><rect x="1752" y="797" width="134" height="16" rx="3" class="num"/><circle cx="1743" cy="805" r="2.800" fill="#a1a1a1"/><text x="1819" y="809" class="v">0.000</text><circle cx="1896" cy="805" r="1.700" class="dot"/>

<path d="M1633 824l5 3l-5 3z" fill="#ccc"/><text x="1726" y="831" class="l">Металличность</text>
<rect x="1735" y="819" width="151" height="16" rx="3" class="fd"/><circle cx="1743" cy="827" r="2.800" fill="#a1a1a1"/><text x="1754" y="831" class="f">Металличность</text>

<text x="1726" y="853" class="l">Блик</text>
<rect x="1735" y="841" width="17" height="16" rx="3" class="sk"/><rect x="1752" y="841" width="134" height="16" rx="3" class="num"/><rect x="1752" y="841" width="66" height="16" fill="#4772b3"/><circle cx="1743" cy="849" r="2.800" fill="#a1a1a1"/><text x="1819" y="853" class="v">0.500</text><circle cx="1896" cy="849" r="1.700" class="dot"/>

<text x="1726" y="875" class="l">Цветной блик</text>
<rect x="1735" y="863" width="17" height="16" rx="3" class="sk"/><rect x="1752" y="863" width="134" height="16" rx="3" class="num"/><circle cx="1743" cy="871" r="2.800" fill="#a1a1a1"/><text x="1819" y="875" class="v">0.000</text><circle cx="1896" cy="871" r="1.700" class="dot"/>

<path d="M1633 890l5 3l-5 3z" fill="#ccc"/><text x="1726" y="897" class="l">Шероховатость</text>
<rect x="1735" y="885" width="151" height="16" rx="3" class="fd"/><circle cx="1743" cy="893" r="2.800" fill="#a1a1a1"/><text x="1754" y="897" class="f">Шероховатость</text>

<text x="1726" y="919" class="l">Анизотропность</text>
<rect x="1735" y="907" width="17" height="16" rx="3" class="sk"/><rect x="1752" y="907" width="134" height="16" rx="3" class="num"/><circle cx="1743" cy="915" r="2.800" fill="#a1a1a1"/><text x="1819" y="919" class="v">0.000</text><circle cx="1896" cy="915" r="1.700" class="dot"/>

<text x="1726" y="941" class="l">Поворот анизотро...</text>
<rect x="1735" y="929" width="17" height="16" rx="3" class="sk"/><rect x="1752" y="929" width="134" height="16" rx="3" class="num"/><circle cx="1743" cy="937" r="2.800" fill="#a1a1a1"/><text x="1819" y="941" class="v">0.000</text><circle cx="1896" cy="937" r="1.700" class="dot"/>

<text x="1726" y="963" class="l">Блеск ткани</text>
<rect x="1735" y="951" width="17" height="16" rx="3" class="sk"/><rect x="1752" y="951" width="134" height="16" rx="3" class="num"/><circle cx="1743" cy="959" r="2.800" fill="#a1a1a1"/><text x="1819" y="963" class="v">0.000</text><circle cx="1896" cy="959" r="1.700" class="dot"/>

<text x="1726" y="985" class="l">Оттенок блеска тк...</text>
<rect x="1735" y="973" width="17" height="16" rx="3" class="sk"/><rect x="1752" y="973" width="134" height="16" rx="3" class="num"/><rect x="1752" y="973" width="66" height="16" fill="#4772b3"/><circle cx="1743" cy="981" r="2.800" fill="#a1a1a1"/><text x="1819" y="985" class="v">0.500</text><circle cx="1896" cy="981" r="1.700" class="dot"/>

<text x="1726" y="1007" class="l">Лак</text>
<rect x="1735" y="995" width="17" height="16" rx="3" class="sk"/><rect x="1752" y="995" width="134" height="16" rx="3" class="num"/><circle cx="1743" cy="1003" r="2.800" fill="#a1a1a1"/><text x="1819" y="1007" class="v">0.000</text><circle cx="1896" cy="1003" r="1.700" class="dot"/>

<rect x="1735" y="1017" width="17" height="8" class="sk"/><rect x="1752" y="1017" width="134" height="8" class="num"/><rect x="1752" y="1017" width="3" height="8" fill="#4772b3"/>
</g>

<!-- status bar -->
<rect x="0" y="1024" width="1919" height="12" fill="#1c1c1c"/>
<g fill="none" stroke="#999"><rect x="11" y="1026" width="8" height="9" rx="2"/><rect x="220" y="1026" width="8" height="9" rx="2"/><rect x="431" y="1026" width="8" height="9" rx="2"/></g>
<rect x="11" y="1026" width="4" height="4" fill="#999"/><rect x="223" y="1026" width="2" height="4" fill="#999"/><rect x="435" y="1026" width="4" height="4" fill="#999"/>
<text x="31" y="1034" class="d">Выделить</text>
<text x="240" y="1034" class="d">Повернуть вид</text>
<text x="450" y="1034" class="d">Контекстное меню объектов</text>
<text x="1888" y="1034" class="d">3.5.1</text>
</svg>
</body></html>
